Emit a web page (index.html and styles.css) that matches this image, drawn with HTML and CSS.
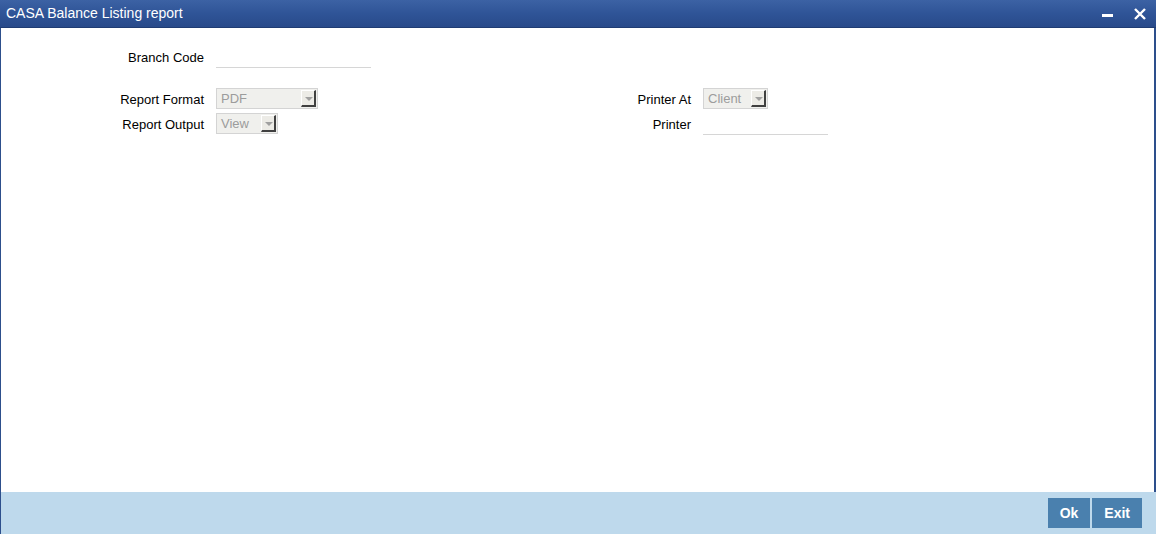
FILE: index.html
```html
<!DOCTYPE html>
<html lang="en">
<head>
    <meta charset="utf-8">
    <title>CASA Balance Listing report</title>
    <link rel="stylesheet" href="styles.css">
</head>
<body>
    <div class="window">
        <div class="titlebar">
            <span class="title">CASA Balance Listing report</span>
            <div class="controls">
                <svg class="ctl" width="12" height="12" viewBox="0 0 12 12"><rect x="0" y="6" width="11" height="3" fill="#fff"/></svg>
                <svg class="ctl" width="14" height="14" viewBox="0 0 14 14"><path d="M2 2 L12 12 M12 2 L2 12" stroke="#fff" stroke-width="2.4"/></svg>
            </div>
        </div>
        <div class="content">
            <div class="row branch">
                <label class="lbl">Branch Code</label>
                <div class="textfield wide"></div>
            </div>
            <div class="cols">
                <div class="col">
                    <div class="row">
                        <label class="lbl">Report Format</label>
                        <div class="select" style="width: 102px;"><span>PDF</span><i class="arrow"></i></div>
                    </div>
                    <div class="row">
                        <label class="lbl">Report Output</label>
                        <div class="select" style="width: 62px;"><span>View</span><i class="arrow"></i></div>
                    </div>
                </div>
                <div class="col right">
                    <div class="row">
                        <label class="lbl">Printer At</label>
                        <div class="select" style="width: 65px;"><span>Client</span><i class="arrow"></i></div>
                    </div>
                    <div class="row">
                        <label class="lbl">Printer</label>
                        <div class="textfield"></div>
                    </div>
                </div>
            </div>
        </div>
        <div class="footer">
            <button class="btn">Ok</button>
            <button class="btn">Exit</button>
        </div>
    </div>
</body>
</html>
```

FILE: styles.css
```css
body {
    margin: 0;
    font-family: "Liberation Sans", Arial, sans-serif;
    background: #fff;
}
.window {
    width: 1156px;
    height: 534px;
    box-sizing: border-box;
    border-left: 1px solid #2d4f8c;
    border-right: 2px solid #2d4f8c;
    display: flex;
    flex-direction: column;
}
.titlebar {
    height: 28px;
    flex: none;
    display: flex;
    align-items: center;
    justify-content: space-between;
    background: linear-gradient(to bottom, #3c62a4 0%, #2f5497 50%, #284a8a 100%);
    border-bottom: 1px solid #1f3c73;
    box-sizing: border-box;
    padding: 0 6px 0 6px;
    margin-left: -1px;
    margin-right: -2px;
}
.title {
    color: #fff;
    font-size: 14px;
    padding-bottom: 1px;
}
.controls {
    display: flex;
    align-items: center;
    gap: 19px;
    padding-right: 3px;
}
.ctl {
    display: block;
}
.content {
    flex: 1;
    padding-top: 20px;
}
.row {
    display: flex;
    align-items: center;
    height: 25px;
}
.row.branch {
    height: 30px;
    margin-bottom: 9px;
}
.lbl {
    width: 215px;
    text-align: right;
    padding-right: 12px;
    box-sizing: border-box;
    font-size: 13px;
    color: #000;
    flex: none;
}
.row.branch .lbl {
    margin-top: -12px;
}
.textfield {
    width: 125px;
    height: 1px;
    background: #d6d6d6;
    margin-top: 20px;
}
.textfield.wide {
    width: 155px;
    margin-top: 8px;
}
.cols {
    display: flex;
}
.col {
    width: 487px;
}
.select {
    box-sizing: border-box;
    border: 1px solid #d4d4d4;
    background: #f0f0ed;
    display: flex;
    align-items: center;
    justify-content: space-between;
    padding-left: 4px;
    font-size: 13px;
    color: #9c9c9c;
    margin-top: -2px;
    height: 21px;
}
.arrow {
    width: 15px;
    height: 17px;
    box-sizing: border-box;
    border-top: 1px solid #fff;
    border-left: 1px solid #fff;
    border-right: 2px solid #404040;
    border-bottom: 2px solid #404040;
    background: #ecebe6;
    position: relative;
    margin-right: 1px;
}
.arrow::after {
    content: "";
    position: absolute;
    left: 3px;
    top: 6px;
    border-left: 4px solid transparent;
    border-right: 4px solid transparent;
    border-top: 4px solid #a0a0a0;
}
.footer {
    height: 42px;
    flex: none;
    background: #bed9ec;
    display: flex;
    align-items: center;
    justify-content: flex-end;
    gap: 2px;
    padding-right: 14px;
    margin-right: -2px;
}
.btn {
    height: 30px;
    border: none;
    background: #4a80ae;
    color: #fff;
    font-family: "Liberation Sans", Arial, sans-serif;
    font-size: 14px;
    font-weight: bold;
    padding: 0 12px;
    min-width: 42px;
}
```
